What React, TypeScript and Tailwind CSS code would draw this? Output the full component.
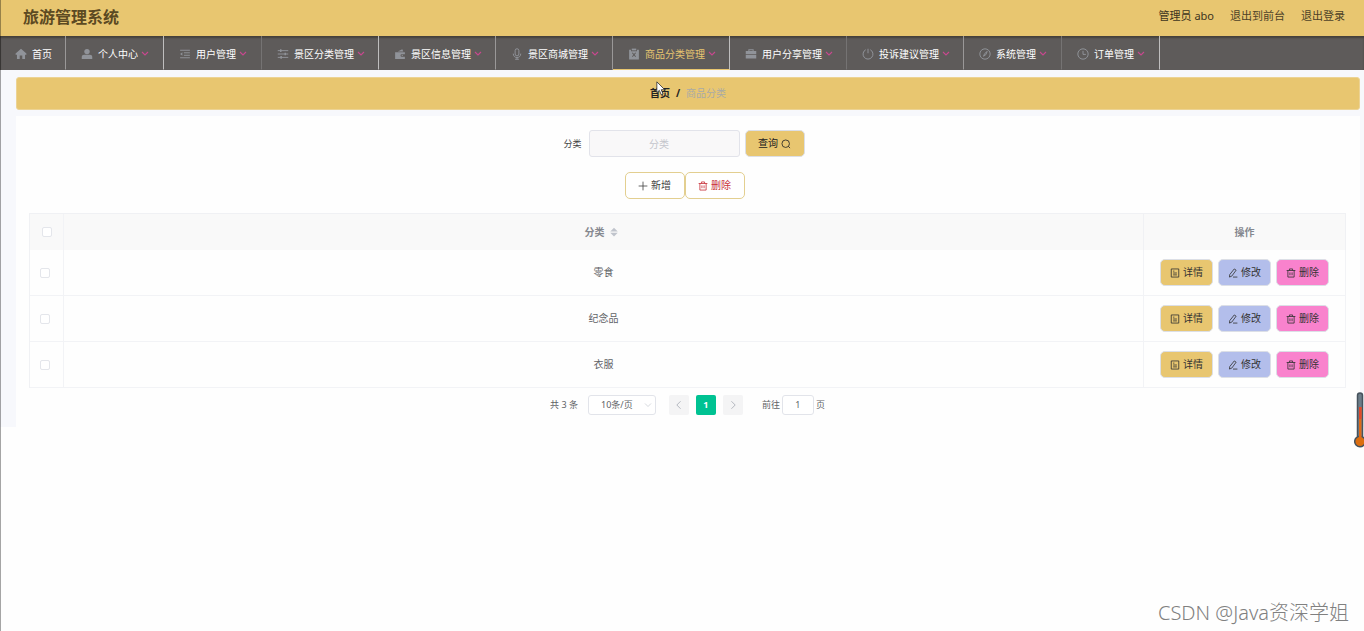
import * as React from "react";
import clsx from "clsx";

type IconProps = { className?: string; children: React.ReactNode };

function Solid({ className, children }: IconProps) {
  return (
    <svg viewBox="0 0 16 16" aria-hidden="true" className={clsx("shrink-0", className)} fill="currentColor">
      {children}
    </svg>
  );
}

function Line({ className, children }: IconProps) {
  return (
    <svg
      viewBox="0 0 16 16"
      aria-hidden="true"
      className={clsx("shrink-0", className)}
      fill="none"
      stroke="currentColor"
      strokeWidth="1.3"
    >
      {children}
    </svg>
  );
}

const navIcon = "size-3 text-[#909399]";

const icons = {
  home: (
    <Solid className={navIcon}>
      <path d="M8 1 .8 7.400V9h1.800v5.500H6.300V10h3.400v4.500h3.700V9h1.800V7.400z" />
    </Solid>
  ),
  user: (
    <Solid className={navIcon}>
      <circle cx="8" cy="4.800" r="3.600" />
      <path d="M1 14.500v-2.500c0-2 1.500-3 3-3h8c1.500 0 3 1 3 3v2.500z" />
    </Solid>
  ),
  fold: (
    <Line className={navIcon}>
      <path d="M1.500 3h13M6.500 6.400h8M6.500 9.700h8M1.500 13h13" />
      <path d="M4.500 5.800v4.400L1.500 8z" fill="currentColor" stroke="none" />
    </Line>
  ),
  operation: (
    <Line className={navIcon}>
      <path d="M1 3.500h14M1 8h14M1 12.500h14" />
      <path d="M5 1.800v3.400M11 6.300v3.400M5.500 10.800v3.400" strokeWidth="2" />
    </Line>
  ),
  wallet: (
    <Solid className={navIcon}>
      <path d="m5 4.500 6-3 1.500 3z" />
      <path d="M1.500 5.500h13v2.800h-4.200a1.500 1.500 0 0 0 0 3.200h4.200v3h-13z" />
      <circle cx="11" cy="9.900" r=".8" />
    </Solid>
  ),
  mic: (
    <Line className={navIcon}>
      <rect x="5.500" y="1" width="5" height="9.500" rx="2.500" />
      <path d="M3 7.500c0 7 10 7 10 0M8 12.800V15M5.500 15h5" />
    </Line>
  ),
  clipboard: (
    <Solid className={navIcon}>
      <path d="M5 .8h6v2.400H5z" />
      <path
        fillRule="evenodd"
        d="M1.500 2.200H4v2h8v-2h2.500V15.200h-13zM5.300 6.800 7.100 9l-1.800 2.200.9.700L8 9.900l1.800 2 .9-.7L8.900 9l1.800-2.200-.9-.7L8 8.100l-1.800-2z"
      />
    </Solid>
  ),
  case: (
    <Solid className={navIcon}>
      <path fillRule="evenodd" d="M4.500 4V1.800h7V4H15v4H1V4zm1.300 0h4.400V3H5.800z" />
      <path d="M1 9h14v5H1z" />
    </Solid>
  ),
  power: (
    <Line className={navIcon}>
      <path d="M5 2.300a6.600 6.600 0 1 0 6 0M8 1v6" />
    </Line>
  ),
  compass: (
    <Line className={navIcon}>
      <circle cx="8" cy="8" r="6.900" />
      <path d="m11 4.500-2 4.500-3 2 1.500-3.500z" />
    </Line>
  ),
  clock: (
    <Line className={navIcon}>
      <circle cx="8" cy="8" r="6.900" />
      <path d="M8 3.800V8.500h3.800" />
    </Line>
  ),
};

type NavEntry = {
  label: string;
  icon: keyof typeof icons;
  width: string;
  edge: string;
  active?: boolean;
};

const bright = "border-r-[#bfbebe]";
const mid = "border-r-[#9a9898]";
const dim = "border-r-[#757373]";

const navEntries: NavEntry[] = [
  { label: "首页", icon: "home", width: "w-[66px]", edge: mid },
  { label: "个人中心", icon: "user", width: "w-[98px]", edge: bright },
  { label: "用户管理", icon: "fold", width: "w-[98px]", edge: dim },
  { label: "景区分类管理", icon: "operation", width: "w-[117px]", edge: bright },
  { label: "景区信息管理", icon: "wallet", width: "w-[117px]", edge: mid },
  { label: "景区商城管理", icon: "mic", width: "w-[117px]", edge: mid },
  { label: "商品分类管理", icon: "clipboard", width: "w-[117px]", edge: bright, active: true },
  { label: "用户分享管理", icon: "case", width: "w-[117px]", edge: dim },
  { label: "投诉建议管理", icon: "power", width: "w-[117px]", edge: mid },
  { label: "系统管理", icon: "compass", width: "w-[98px]", edge: dim },
  { label: "订单管理", icon: "clock", width: "w-[98px]", edge: bright },
];

const rows = ["零食", "纪念品", "衣服"];

function TrashIcon() {
  return (
    <Line className="size-[10px]">
      <path d="M1 4h14M5.500 4V1.500h5V4M3 4v10.500h10V4M6.300 7v4.500M9.700 7v4.500" />
    </Line>
  );
}

function DetailIcon() {
  return (
    <Line className="size-[10px]">
      <path d="M2 1.500h12v13H2zM5 5h2M5 8h6M5 11h6" />
    </Line>
  );
}

function EditIcon() {
  return (
    <Line className="size-[10px]">
      <path d="m10 1.500 3 2-7 9.500-3.700 1.500.5-4zM8 14.500h7" />
    </Line>
  );
}

function NavItem({ label, icon, width, edge, active }: NavEntry) {
  return (
    <li className={clsx("shrink-0", width)}>
      <a
        href="#"
        aria-current={active ? "page" : undefined}
        className={clsx(
          "flex h-full items-center border-r border-b pt-[3px] pl-[15px] text-[10px] whitespace-nowrap",
          edge,
          active ? "border-b-[#e8c670] text-[#e8c670]" : "border-b-transparent text-white",
        )}
      >
        {icons[icon]}
        <span className="ml-[5px]">{label}</span>
        {icon !== "home" && (
          <Line className="ml-[3px] size-2 text-[#c9488f]">
            <path d="m2 4 6 6 6-6" strokeWidth="2.200" />
          </Line>
        )}
      </a>
    </li>
  );
}

type RowButtonProps = { tone: string; icon: React.ReactNode; children: React.ReactNode };

function RowButton({ tone, icon, children }: RowButtonProps) {
  return (
    <button
      type="button"
      className={clsx(
        "flex h-[27px] w-[53px] items-center justify-center gap-[3px] rounded-[5px] border border-[#dcdfe6] text-[10px] text-[#333]",
        tone,
      )}
    >
      {icon}
      {children}
    </button>
  );
}

function Checkbox({ label }: { label: string }) {
  return (
    <input
      type="checkbox"
      aria-label={label}
      className="block size-[10px] appearance-none rounded-[2px] border border-[#e4e6eb] bg-white"
    />
  );
}

function Pagination() {
  return (
    <div className="mt-[6px] flex h-[21px] items-center justify-center text-[9px] text-[#606266]">
      <span>共 3 条</span>
      <div className="relative ml-[10px]">
        <select
          aria-label="每页条数"
          className="block h-[20px] w-[68px] appearance-none rounded-[3px] border border-[#e2e4ea] bg-white pr-[10px] text-center"
        >
          <option>10条/页</option>
        </select>
        <Line className="pointer-events-none absolute top-[6px] right-1 size-2 text-[#c0c4cc]">
          <path d="m2 5 6 6 6-6" />
        </Line>
      </div>
      <button
        type="button"
        aria-label="上一页"
        disabled
        className="ml-[13px] grid size-[20px] place-items-center rounded-[2px] bg-[#f4f4f5] text-[#b4b8c0]"
      >
        <Line className="size-[10px]">
          <path d="m10.500 2-6 6 6 6" strokeWidth="1.600" />
        </Line>
      </button>
      <button
        type="button"
        aria-current="page"
        className="ml-[7px] size-[20px] rounded-[2px] bg-[#00c292] font-bold text-white"
      >
        1
      </button>
      <button
        type="button"
        aria-label="下一页"
        disabled
        className="ml-[7px] grid size-[20px] place-items-center rounded-[2px] bg-[#f4f4f5] text-[#b4b8c0]"
      >
        <Line className="size-[10px]">
          <path d="m5.500 2 6 6-6 6" strokeWidth="1.600" />
        </Line>
      </button>
      <label htmlFor="page" className="ml-[19px]">
        前往
      </label>
      <input
        id="page"
        defaultValue="1"
        className="mx-[2px] h-[20px] w-8 rounded-[3px] border border-[#e2e4ea] bg-white text-center"
      />
      <span>页</span>
    </div>
  );
}

function Thermometer() {
  return (
    <svg viewBox="0 0 10 56" aria-hidden="true" className="pointer-events-none absolute top-[392px] right-0 h-14 w-[10px]">
      <rect x="3.500" y="1" width="5" height="46" rx="2.500" fill="#6d7d88" stroke="#46525c" strokeWidth="1.500" />
      <circle cx="6" cy="49.500" r="5.300" fill="#dc6e10" stroke="#46525c" strokeWidth="1.500" />
      <path d="M5 15h2.500v31H5z" fill="#df6a18" />
      <path d="M5 15h2.500v12H5z" fill="#e0492b" />
    </svg>
  );
}

export default function App() {
  return (
    <div className="relative min-h-screen overflow-hidden bg-[#fefefe] font-['Noto_Sans','Noto_Sans_CJK_SC',sans-serif]">
      <header className="flex h-9 items-center justify-between bg-[#e8c670] pr-[19px] pb-[3px] pl-[23px]">
        <h1 className="text-[16px] leading-6 font-bold text-[#5c4a22]">旅游管理系统</h1>
        <div className="flex items-center gap-4 text-[11px] text-[#4d4228]">
          <span className="text-[#3d3420]">管理员 abo</span>
          <a href="#">退出到前台</a>
          <a href="#">退出登录</a>
        </div>
      </header>

      <nav className="h-[34px] bg-[#5e5b5a] shadow-[inset_0_2px_2px_#45413c]">
        <ul className="flex h-full">
          {navEntries.map((entry) => (
            <NavItem key={entry.label} {...entry} />
          ))}
        </ul>
      </nav>

      <main className="bg-[#f7f8fc] pt-[7px] pr-1 pl-4">
        <div className="relative flex h-[33px] items-center justify-center gap-[6px] rounded-[3px] border border-[#ecd394] bg-[#e8c670] text-[10px]">
          <a href="#" className="font-bold text-[#222]">
            首页
          </a>
          <span className="font-bold text-[#222]">/</span>
          <span className="text-[#a9aaa6]">商品分类</span>
          <svg
            viewBox="0 0 12 18"
            aria-hidden="true"
            className="pointer-events-none absolute top-[3px] left-1/2 -ml-8 h-[15px] w-[10px]"
          >
            <path d="M1 1v13l3-2.800 2.300 5.300 2.200-1-2.300-5H10.500z" fill="#fff" stroke="#333" />
          </svg>
        </div>

        <section className="mt-[6px] bg-[#fefefe] pt-[14px] pr-[14px] pb-3 pl-[13px]">
          <form className="flex items-center justify-center pr-[7px]" onSubmit={(e) => e.preventDefault()}>
            <label htmlFor="category" className="text-[9px] text-[#444]">
              分类
            </label>
            <input
              id="category"
              placeholder="分类"
              className="ml-[7px] h-[27px] w-[151px] rounded-[3px] border border-[#e2e3ea] bg-[#f9f8f9] pr-[10px] text-center text-[10px] placeholder:text-[#c4c5cc]"
            />
            <button
              type="submit"
              className="ml-[5px] flex h-[27px] w-[60px] items-center justify-center gap-[3px] rounded-[5px] border border-[#dcdfe6] bg-[#e8c670] text-[10px] text-[#222]"
            >
              查询
              <Line className="size-[10px]">
                <circle cx="7.500" cy="7.500" r="6" />
                <path d="m11.800 11.800 2.700 2.700" />
              </Line>
            </button>
          </form>

          <div className="mt-[15px] flex justify-center pr-[6px]">
            <button
              type="button"
              className="flex h-[27px] w-[60px] items-center justify-center gap-[3px] rounded-[5px] border border-[#e3cf90] bg-white text-[10px] text-[#444]"
            >
              <Line className="size-[10px]">
                <path d="M8 1v14M1 8h14" />
              </Line>
              新增
            </button>
            <button
              type="button"
              className="flex h-[27px] w-[60px] items-center justify-center gap-[3px] rounded-[5px] border border-[#e3cf90] bg-white text-[10px] text-[#c8303a]"
            >
              <TrashIcon />
              删除
            </button>
          </div>

          <table className="mt-[14px] w-full table-fixed border-separate border-spacing-0 border-t border-l border-[#f0f1f4] text-center text-[10px] text-[#606266]">
            <colgroup>
              <col className="w-[34px]" />
              <col />
              <col className="w-[202px]" />
            </colgroup>
            <thead className="bg-[#f9f9f9] text-[#85888f]">
              <tr className="h-[36px]">
                <th className="border-r border-[#f2f3f6] pl-3">
                  <Checkbox label="全选" />
                </th>
                <th className="border-r border-[#f0f1f4] pr-1">
                  <div className="flex items-center justify-center gap-1">
                    分类
                    <Solid className="size-[10px] text-[#c0c4cc]">
                      <path d="M8 1 14 7H2zM2 9h12l-6 6z" />
                    </Solid>
                  </div>
                </th>
                <th className="border-r border-[#f0f1f4]">操作</th>
              </tr>
            </thead>
            <tbody>
              {rows.map((name) => (
                <tr key={name} className="h-[46px]">
                  <td className="border-r border-b border-[#f2f3f6] pl-[10px]">
                    <Checkbox label={name} />
                  </td>
                  <td className="border-r border-b border-[#f2f3f6]">{name}</td>
                  <td className="border-r border-b border-[#f2f3f6]">
                    <div className="flex justify-center gap-[5px]">
                      <RowButton tone="bg-[#e8c670]" icon={<DetailIcon />}>
                        详情
                      </RowButton>
                      <RowButton tone="bg-[#b3beeb]" icon={<EditIcon />}>
                        修改
                      </RowButton>
                      <RowButton tone="bg-[#f982cd]" icon={<TrashIcon />}>
                        删除
                      </RowButton>
                    </div>
                  </td>
                </tr>
              ))}
            </tbody>
          </table>

          <Pagination />
        </section>
      </main>

      <div className="pointer-events-none absolute inset-y-0 left-0 w-px bg-black/35" />
      <Thermometer />
      <p className="absolute right-[15px] bottom-1 text-[20px] leading-7 font-light text-[#808080]">CSDN @Java资深学姐</p>
    </div>
  );
}
